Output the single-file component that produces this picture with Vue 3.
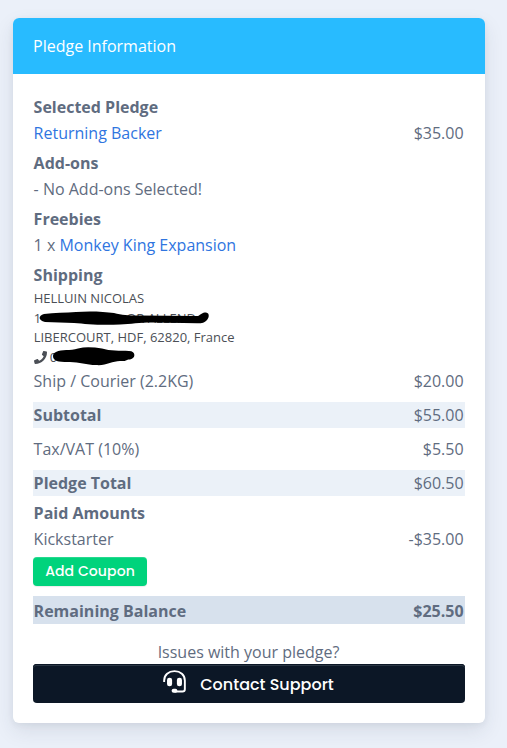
<template>
  <div class="page">
    <section class="card">
      <header class="card-header">Pledge Information</header>
      <div class="card-body">
        <div class="row title">Selected Pledge</div>
        <div class="row">
          <a class="link">Returning Backer</a>
          <span>$35.00</span>
        </div>

        <div class="row title spaced">Add-ons</div>
        <div class="row">- No Add-ons Selected!</div>

        <div class="row title spaced">Freebies</div>
        <div class="row">
          <span>1 x <a class="link">Monkey King Expansion</a></span>
        </div>

        <div class="row title spaced">Shipping</div>
        <div class="address">
          <div>HELLUIN NICOLAS</div>
          <div class="hidden-line">
            <span>1</span>
            <span class="street-end">OR ALLEND</span>
            <svg class="scribble street" width="172" height="15" viewBox="0 0 172 15">
              <path d="M6 3C16 2 28 1.500 38 1C50 0 66 0.500 76 2C84 4 90 4.500 100 4.500L160 5C163 3.500 164 1.500 168 1.500C172 2 171 7 169 9C166 12 165 12.300 159 12.300L118 11.500C104 11 94 13 82 13.500C62 14.500 48 13 36 12L7 11C0 9 0 5 6 3Z" />
            </svg>
          </div>
          <div>LIBERCOURT, HDF, 62820, France</div>
          <div class="hidden-line">
            <svg class="phone" width="13" height="13" viewBox="0 0 512 512">
              <path d="M493.4 24.6l-104-24c-11.300-2.600-22.900 3.300-27.500 13.900l-48 112c-4.200 9.800-1.400 21.300 6.900 28l60.600 49.600c-36 76.700-98.900 140.500-177.200 177.200l-49.600-60.600c-6.800-8.300-18.200-11.100-28-6.900l-112 48C3.900 366.500-2 378.100.6 389.400l24 104C27.100 504.200 36.700 512 48 512c256.100 0 464-207.500 464-464 0-11.200-7.700-20.900-18.600-23.400z" />
            </svg>
            <span>0</span>
            <svg class="scribble number" width="84" height="19" viewBox="0 0 84 19">
              <path d="M4 5C10 2 18 4 26 1.500C34 -0.500 42 0.500 50 1.500C58 4 68 3.500 77 4C84 4 84 11 78 12.500C74 12 76 14.500 68 14C60 14 54 19 44 18C34 18 26 14.500 16 15C6 15 1 14 1 9C1 7 2 6 4 5Z" />
            </svg>
          </div>
        </div>

        <div class="row">
          <span>Ship / Courier (2.2KG)</span>
          <span>$20.00</span>
        </div>
        <div class="row shaded">
          <b>Subtotal</b>
          <span>$55.00</span>
        </div>
        <div class="row">
          <span>Tax/VAT (10%)</span>
          <span>$5.50</span>
        </div>
        <div class="row shaded">
          <b>Pledge Total</b>
          <span>$60.50</span>
        </div>

        <div class="row title paid">Paid Amounts</div>
        <div class="row">
          <span>Kickstarter</span>
          <span>-$35.00</span>
        </div>
        <button class="coupon">Add Coupon</button>

        <div class="row balance">
          <span>Remaining Balance</span>
          <span>$25.50</span>
        </div>

        <div class="issues">Issues with your pledge?</div>
        <button class="support">
          <svg width="23" height="23" viewBox="0 0 24 24">
            <path class="line" d="M1.200 12.500V11C1.200 5 5.800 1.200 12 1.200S22.800 5 22.800 11V20Q22.800 22.400 20.300 22.400H12" />
            <rect x="4.200" y="8" width="5.300" height="9" rx="2.500" />
            <rect x="14.500" y="8" width="5.300" height="9" rx="2.500" />
            <rect x="9" y="19.500" width="6" height="4.200" rx="2.100" />
          </svg>
          <span>Contact Support</span>
        </button>
      </div>
    </section>
  </div>
</template>

<script setup>
</script>

<style>
body {
  background: #ebf0f9;
}
</style>

<style scoped>
.page {
  box-sizing: border-box;
  height: 748px;
  padding: 18px 22px 25px 13px;
  overflow: hidden;
  font-family: "Open Sans", sans-serif;
  font-size: 16px;
  line-height: 26px;
  color: #5f6c80;
}

.card {
  height: 705px;
  border-radius: 6px;
  background: #fff;
  box-shadow: 0 8px 20px rgba(40, 50, 70, 0.1), 0 2px 6px rgba(40, 50, 70, 0.06);
}

.card-header {
  height: 56px;
  padding-left: 20px;
  border-radius: 6px 6px 0 0;
  background: #28bbff;
  color: #fff;
  line-height: 56px;
}

.card-body {
  padding: 20px;
}

.row {
  display: flex;
  justify-content: space-between;
  height: 26px;
  padding: 0 1.4px 0 0.6px;
}

.title,
.row b {
  font-weight: 700;
}

.spaced,
.paid {
  margin-top: 4px;
}

.link {
  color: #2f75df;
}

.address {
  height: 79px;
  margin-bottom: 1px;
  padding: 0 0.7px;
  font-size: 13px;
  line-height: 19.5px;
  color: #4b4f56;
}

.address > div {
  position: relative;
  top: 1px;
}

.hidden-line {
  display: flex;
}

.street-end {
  margin-left: 85px;
}

/* marker strokes lie over the private details */
.scribble {
  position: absolute;
  fill: #000;
}

.street {
  left: 4px;
  top: 2px;
}

.number {
  left: 18px;
  top: -1px;
}

.phone {
  margin: 3px 3px 0 0;
  fill: #4b4f56;
}

.shaded {
  margin: 8px 0;
  background: #ebf1f8;
}

.shaded + .paid {
  margin-top: -4px;
}

button {
  border: 0;
  border-radius: 4px;
  color: #fff;
  font-family: Poppins, Inter, sans-serif;
  font-weight: 500;
}

.coupon {
  display: block;
  width: 114px;
  height: 29px;
  margin-top: 5px;
  padding: 0;
  background: #00d37c;
  box-shadow: inset 0 1px 0 rgba(255, 255, 255, 0.15), 0 1px 1px rgba(0, 0, 0, 0.08);
  font-size: 14px;
  letter-spacing: 0.1px;
}

.balance {
  height: 28px;
  margin-top: 10px;
  background: #d7e1ed;
  font-weight: 700;
  line-height: 30px;
}

.issues {
  height: 25px;
  margin-top: 15px;
  padding-right: 1px;
  text-align: center;
}

.support {
  display: flex;
  align-items: center;
  justify-content: center;
  gap: 14px;
  width: 100%;
  height: 39px;
  padding: 2px 1px 0 0;
  background: #0c1726;
  box-shadow: inset 0 1px 0 #0c1726, inset 0 2px 0 #2b3744;
  font-size: 16px;
}

.support svg {
  margin-top: -6px;
  fill: #fff;
}

.support .line {
  fill: none;
  stroke: #fff;
  stroke-width: 2;
}
</style>
